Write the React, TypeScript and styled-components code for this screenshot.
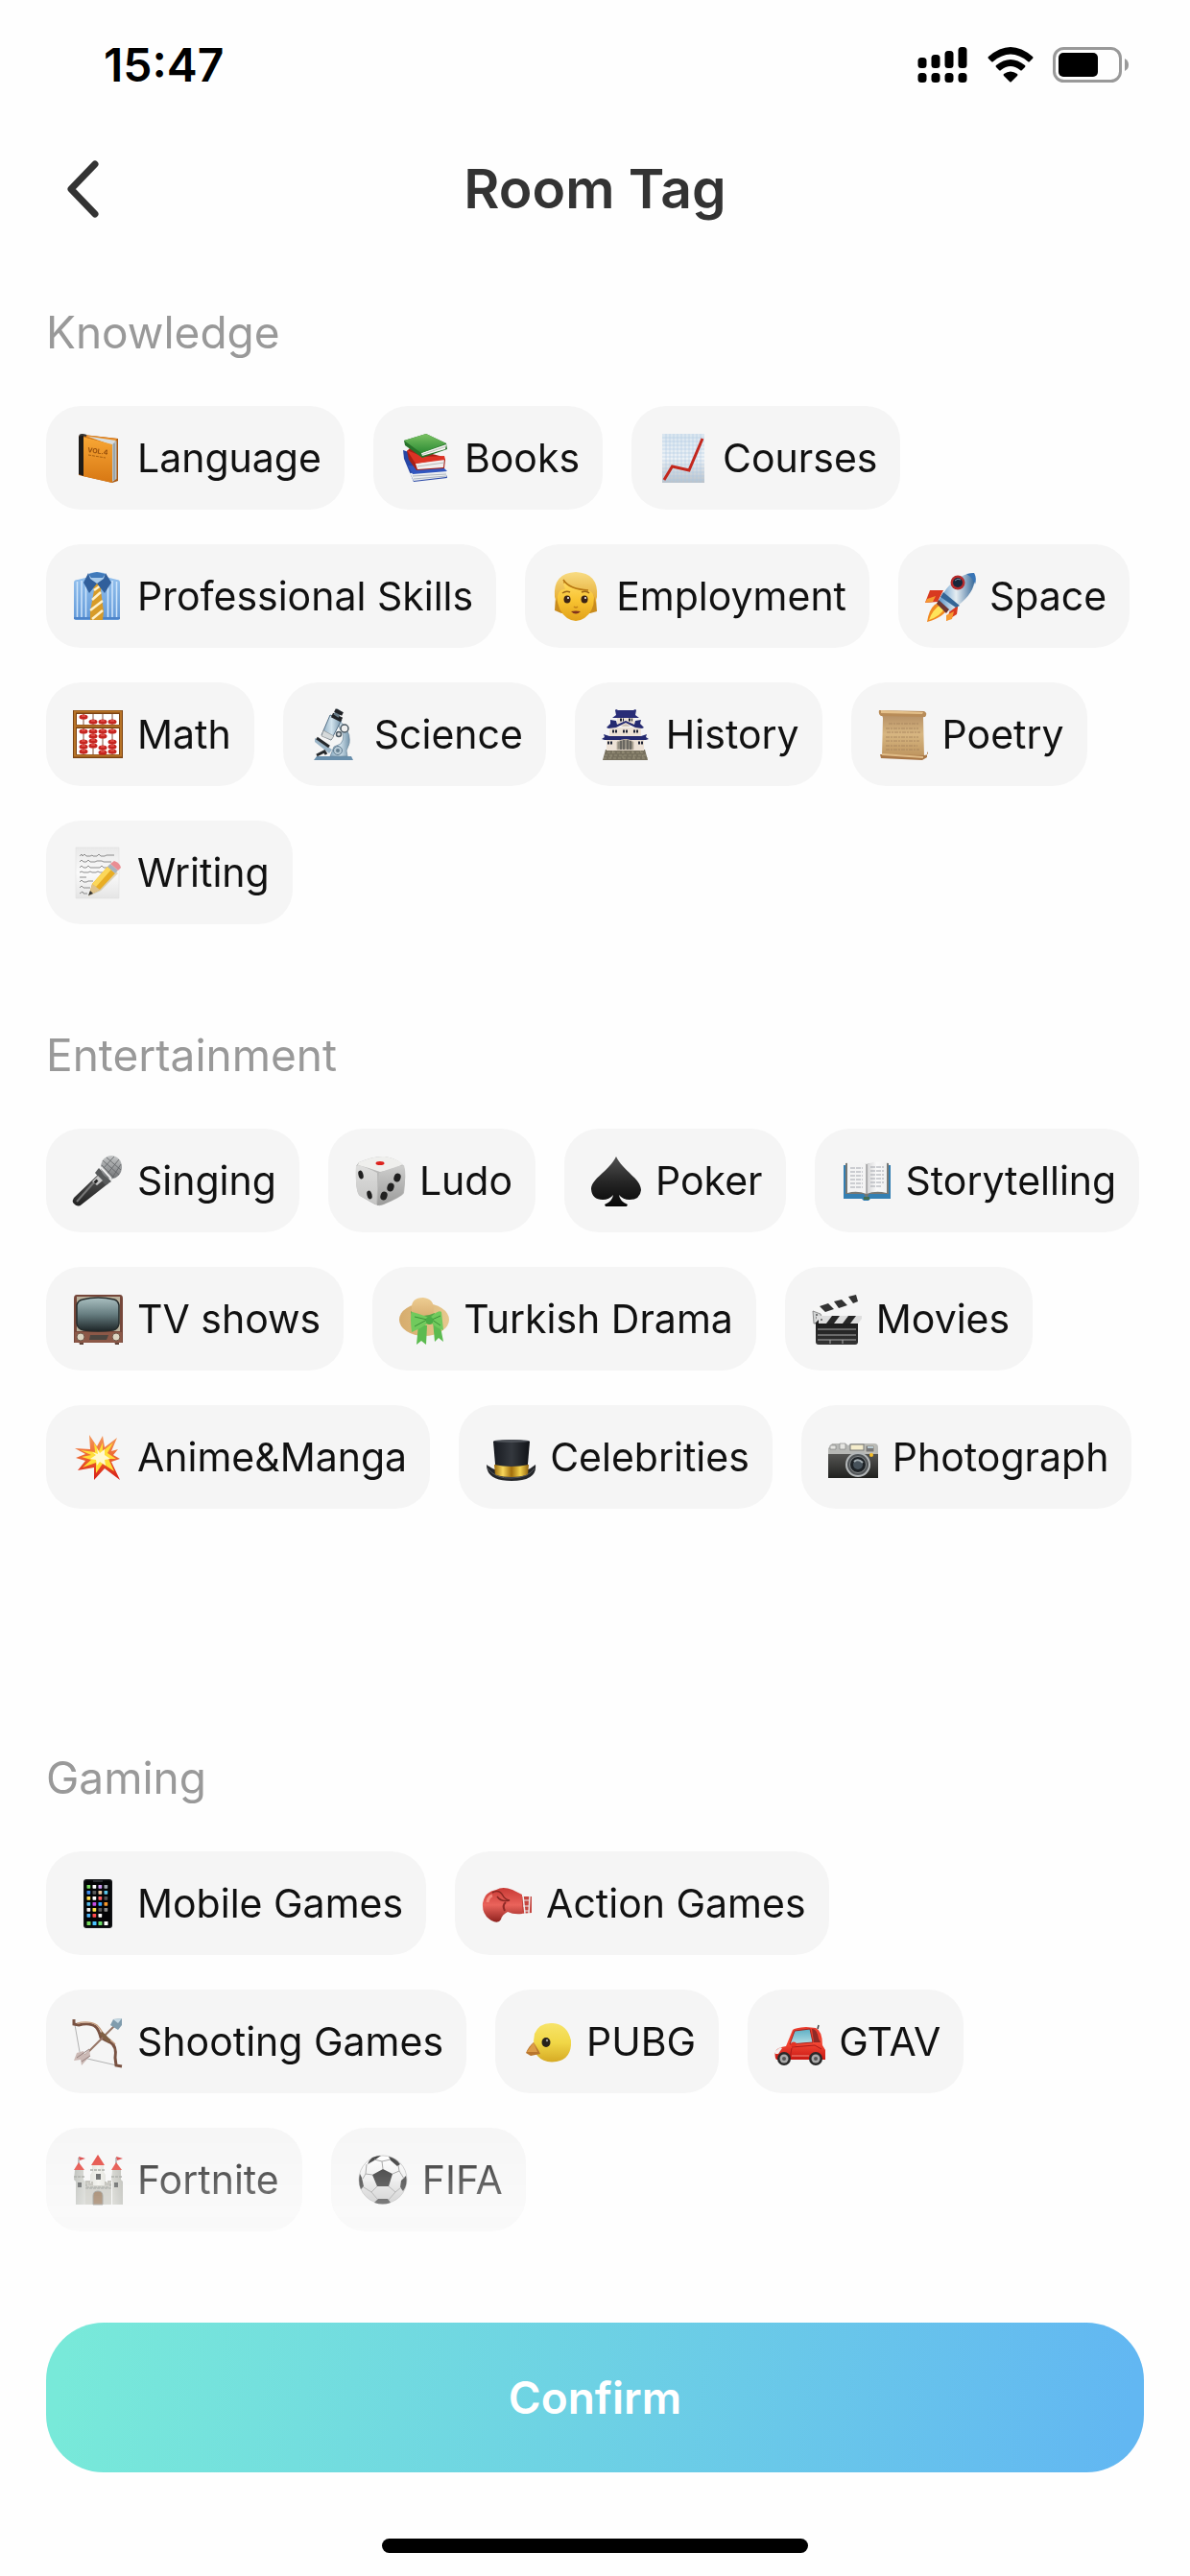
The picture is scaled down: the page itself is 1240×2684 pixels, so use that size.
import React, { useState } from "react";
import styled, { createGlobalStyle } from "styled-components";

const GlobalStyle = createGlobalStyle`
  *, *::before, *::after { box-sizing: border-box; }
  body {
    margin: 0;
    background: #fefefe;
    font-family: Inter, "Liberation Sans", sans-serif;
  }
`;

const Page = styled.div`
  display: flex;
  flex-direction: column;
  min-height: 100vh;
`;

const StatusBar = styled.div`
  display: flex;
  align-items: center;
  justify-content: space-between;
  height: 136px;
  padding: 0 63px 0 108px;
`;

const Clock = styled.time`
  font-size: 48px;
  line-height: 56px;
  font-weight: 600;
  color: #000;
`;

const StatusIcons = styled.div`
  display: flex;
  align-items: center;
  gap: 20px;
  svg { display: block; }
`;

const Header = styled.header`
  display: grid;
  grid-template-columns: 120px 1fr 120px;
  align-items: center;
  height: 122px;
`;

const BackButton = styled.button`
  display: flex;
  justify-content: center;
  padding: 24px 0 24px 52px;
  border: 0;
  background: none;
  color: #333;
  cursor: pointer;
`;

const Title = styled.h1`
  margin: 0;
  text-align: center;
  font-size: 57px;
  line-height: 72px;
  font-weight: 600;
  color: #333;
`;

const Content = styled.main`
  display: flex;
  flex-direction: column;
  flex: 1;
  gap: 108px;
  padding: 60px 48px 95px;
  mask-image: linear-gradient(to bottom, #000 calc(100% - 220px), transparent);
`;

const Section = styled.section`
  display: flex;
  flex-direction: column;
  gap: 49px;
`;

const SectionTitle = styled.h2`
  margin: 0;
  font-size: 46px;
  line-height: 56px;
  font-weight: 400;
  color: #999;
`;

const TagList = styled.div<{ $rows: number }>`
  display: flex;
  flex-wrap: wrap;
  align-content: flex-start;
  gap: 36px 30px;
  min-height: ${(p) => p.$rows * 144 - 36}px;
`;

const Tag = styled.button`
  display: flex;
  align-items: center;
  gap: 15px;
  height: 108px;
  padding: 0 24px 0 28px;
  border: 0;
  border-radius: 36px;
  background: #f5f5f5;
  color: #111;
  font-family: inherit;
  font-size: 41px;
  line-height: 52px;
  white-space: nowrap;
  cursor: pointer;
  &[aria-pressed="true"] { background: #d9f5f2; }
`;

const EmojiSvg = styled.svg`
  display: block;
  flex: none;
  width: 52px;
  height: 52px;
  overflow: visible;
`;

const Footer = styled.footer`
  display: flex;
  flex-direction: column;
  align-items: center;
  gap: 69px;
  padding: 0 48px 24px;
`;

const ConfirmButton = styled.button`
  width: 100%;
  height: 156px;
  border: 0;
  border-radius: 60px;
  background: linear-gradient(98deg, #78e9d9 2%, #6dd1e4 50%, #62b7f2 98%);
  color: #fff;
  font-family: inherit;
  font-size: 46px;
  line-height: 56px;
  font-weight: 600;
  cursor: pointer;
`;

const HomeIndicator = styled.div`
  width: 444px;
  max-width: 100%;
  height: 15px;
  border-radius: 8px;
  background: #000;
`;

const ART: Record<string, React.ReactNode> = {
  ledger: (
    <>
      <path d="M6 4Q7 1 11 2L47 6V50L41 52L6 44Z" fill="#a8570f" />
      <path d="M14 2.5L46 6L45 8L40 12L12 4Z" fill="#e98b22" />
      <path d="M15 3.5L45 8L41 13Z" fill="#d6dde0" />
      <path d="M41 12L45.500 8V48L41 51Z" fill="#b9c2c6" />
      <path d="M43 11V49" stroke="#7f888c" />
      <path d="M10 4L41 12V52L10 45Z" fill="url(#ledgerCover)" />
      <path d="M6 4Q7 1 11 3V45L6 43Z" fill="#1d1b19" />
      <path d="M7 3Q9 1 14 3" stroke="#333" strokeWidth="2" fill="none" />
      <text x="15" y="20" fontSize="7" fontWeight="700" fill="#98500c" transform="rotate(8 15 20)">VOL.4</text>
      <path d="M16 23L34 26" stroke="#a8600f" strokeWidth="1" strokeDasharray="3 1" />
    </>
  ),
  books: (
    <>
      <path d="M3 18L9 20L47 40L49 47L14 51L4 27Z" fill="#2746a5" />
      <path d="M10 42L48 39L48 46L14 50Z" fill="#eceef0" />
      <path d="M8 34L45 36L49 40L13 43Z" fill="#3156bf" />
      <path d="M13 45L48 43M14 48L48 45" stroke="#9ca7b5" strokeWidth=".8" />
      <path d="M7 19L10 16L45 25L47 28L46 37L17 39L9 28Z" fill="#a61f16" />
      <path d="M16 32L46 27L45 36L18 38Z" fill="#f1eeee" />
      <path d="M7 18L24 25L46 24L47 28L16 32Z" fill="#dc3324" />
      <path d="M18 35L46 31" stroke="#aaa" strokeWidth=".8" />
      <path d="M4 8L27 1L48 11L49 17L23 26L5 13Z" fill="#27722a" />
      <path d="M22 21L48 12L47 17L23 24Z" fill="#f7f7f4" />
      <path d="M4 8L27 1L48 11L22 21Z" fill="url(#booksGreen)" />
      <path d="M23 22.500L47 14.500" stroke="#aab0a8" strokeWidth=".8" />
    </>
  ),
  chart: (
    <>
      <path d="M4 1H48V52H4Z" fill="url(#chartPaper)" />
      <path d="M8 1V52M12 1V52M16 1V52M20 1V52M24 1V52M28 1V52M32 1V52M36 1V52M40 1V52M44 1V52M4 5H48M4 9H48M4 13H48M4 17H48M4 21H48M4 25H48M4 29H48M4 33H48M4 37H48M4 41H48M4 45H48M4 49H48" stroke="#a9c4e2" strokeWidth=".5" />
      <path d="M6 49L14.500 35L32 39L46 6" fill="none" stroke="#c3271d" strokeWidth="3" />
    </>
  ),
  shirt: (
    <>
      <path d="M1 12Q1 9 5 9L17 6H34L46 9Q49 9 49 12V49Q49 51 47 51H3Q1 51 1 49Z" fill="url(#shirtBlue)" />
      <path d="M4.500 11V48M9 10V48M13.500 10V48M36.500 10V48M41 10V48M45.500 11V48" stroke="#cfe5fb" strokeWidth="1.500" />
      <path d="M1 49H18M31 49H49" stroke="#4c83c9" strokeWidth="2" />
      <path d="M18 2Q25 0 33 2L36 9L25 15L15 9Z" fill="#a9cbea" />
      <path d="M20 13H30L29 20L32 42L31 51H18V42L22 20Z" fill="#d79b28" />
      <path d="M22 20L29 15M20 30L29 22M18 41L31 31M20 50L31 41" stroke="#fff1c9" strokeWidth="2.500" />
      <path d="M16 2L11 12L17 23L25 13L18 8Z" fill="#315f9b" />
      <path d="M34 2L40 12L33 23L25 13L32 8Z" fill="#315f9b" />
      <path d="M16 3L25 1L34 3L31 7H19Z" fill="#417aba" />
    </>
  ),
  person: (
    <>
      <path d="M4 26Q4 8 25 8Q46 8 46 29L47 42L40 44H10L3 41Z" fill="#c98b1c" />
      <path d="M5 25Q8 10 25 9Q43 10 44 28Q44 42 34 49Q25 55 16 49Q6 42 5 25Z" fill="url(#skin)" />
      <path d="M3 27Q1 2 25 1Q49 2 47 27L45 34Q45 22 38 20Q22 18 12 10Q12 15 14 19Q8 18 6 26L5 32Z" fill="url(#hair)" />
      <path d="M12 9Q18 19 38 20" fill="none" stroke="#b67612" strokeWidth="1.500" />
      <ellipse cx="16" cy="29.500" rx="3.500" ry="4" fill="#3c2415" />
      <ellipse cx="34" cy="29.500" rx="3.500" ry="4" fill="#3c2415" />
      <circle cx="17" cy="28" r="1" fill="#fff" />
      <circle cx="35" cy="28" r="1" fill="#fff" />
      <path d="M11 23Q15 20 19 22M31 22Q36 20 39 23" fill="none" stroke="#9b6516" strokeWidth="1.500" />
      <path d="M23 37Q25 39 27 37" fill="none" stroke="#c4831a" strokeWidth="1.500" />
      <path d="M20 42Q25 41 30 42Q25 47 20 42Z" fill="#81331d" />
    </>
  ),
  rocket: (
    <>
      <path d="M5 20L19 20L13 32L0 33Z" fill="#d83a20" />
      <path d="M28 35L35 31L33 45L22 52Z" fill="#d83a20" />
      <path d="M2 29L11 26L8 32L0 33ZM22 46L30 42L28 50L22 52Z" fill="#f69a32" />
      <path d="M17 31L24 38Q20 48 2 53Q4 40 10 35Z" fill="#f08922" />
      <path d="M17 34L21 38Q16 47 4 51Q7 41 17 34Z" fill="#ffe45a" />
      <path d="M51 2Q55 20 34 36L26 42L13 32L19 23Q32 3 51 2Z" fill="url(#rocketBody)" />
      <path d="M19 22L36 36L32 38L16 27Z" fill="#346596" />
      <path d="M43 3Q51 8 52 14Q54 7 51 2Z" fill="#3875b6" />
      <path d="M14 30L25 40L22 44L12 34Z" fill="#6e3532" />
      <circle cx="34" cy="12" r="7.500" fill="#b52b2c" />
      <circle cx="34" cy="12" r="5" fill="#17263b" />
      <path d="M31 10Q34 7 37 9" fill="none" stroke="#7990a7" />
    </>
  ),
  abacus: (
    <>
      <path d="M0 1H52V51H0Z" fill="#fff" />
      <path d="M11 3V49M21 3V49M31 3V49M41 3V49" stroke="#86513a" strokeWidth="1" />
      <path d="M2 3H50V49H2ZM2 18H50" fill="none" stroke="#7b4313" strokeWidth="4" />
      <path d="M2 2.500H50V48.500H2ZM2 17.500H50" fill="none" stroke="#b87428" strokeWidth="2" />
      {[[11, 8], [21, 13], [31, 13], [41, 13], [11, 23], [21, 23], [31, 23], [41, 23], [21, 28], [31, 28], [11, 34], [21, 33], [41, 34], [11, 39], [21, 38], [31, 40], [41, 39], [11, 44], [31, 45], [41, 44]].map(([x, y]) => (
        <g key={`${x}-${y}`}>
          <ellipse cx={x} cy={y} rx="4.500" ry="2.600" fill="#c62520" />
          <path d={`M${x - 2} ${y - 1}H${x + 2}`} stroke="#f46c62" />
        </g>
      ))}
    </>
  ),
  microscope: (
    <>
      <path d="M7 49H43L45 53H4Z" fill="#698fac" />
      <path d="M29 10Q48 27 38 43L39 49H21L25 39L32 36Q38 28 31 20Z" fill="url(#steel)" stroke="#6b879b" strokeWidth=".7" />
      <path d="M5 30L23 42L20 46L5 34Z" fill="#9ab4c6" />
      <path d="M7 30L20 39" stroke="#26292c" strokeWidth="3" />
      <path d="M7 48L15 44L17 47" stroke="#26292c" strokeWidth="3" fill="none" />
      <path d="M21 6L33 11L22 32L12 27Z" fill="url(#steel)" stroke="#547086" />
      <path d="M14 22L25 28L22 32L12 28Z" fill="#d6dadb" stroke="#777" strokeWidth=".5" />
      <path d="M23 6L33 11" stroke="#202226" strokeWidth="5" />
      <path d="M27 7L31 1" stroke="#697c88" strokeWidth="6" />
      <path d="M26 1L34 5" stroke="#202226" strokeWidth="4" />
      <circle cx="36" cy="20" r="4" fill="#eee" stroke="#49565f" strokeWidth="1.500" />
      <circle cx="30" cy="26" r="2.500" fill="#ddd" stroke="#49565f" strokeWidth="1.500" />
      <circle cx="29" cy="43" r="4.500" fill="#b7cad6" stroke="#627d91" />
      <circle cx="29" cy="43" r="2" fill="#657f91" />
    </>
  ),
  japanCastle: (
    <>
      <path d="M4 42H45L48 53H1Z" fill="#77705e" />
      <path d="M6 45H43M3 48H46M2 51H48M12 43L9 52M22 43V52M32 43L34 52M40 43L44 52" stroke="#979079" strokeWidth="1" strokeDasharray="3 2" />
      <path d="M5 30H44V43H5ZM8 19H41V28H8ZM16 8H34V17H16Z" fill="#ede2d6" />
      <path d="M14 1L15 0L17 1H33L35 0L36 1L35 6L39 9H11L15 6Z" fill="#292d77" />
      <path d="M9 11L15 12L16 16L25 12L34 16L35 12L41 11L40 15L44 19L42 20L35 19L25 14L15 19L7 20L5 19L9 15Z" fill="#252a70" />
      <path d="M25 15L30 18H20Z" fill="#cfc3b8" />
      <path d="M2 26L8 28H41L47 26L46 29L49 31L46 32H3L0 31L3 29Z" fill="#252a70" />
      <path d="M16 42V34Q25 29 33 34V42Z" fill="#969083" stroke="#c4b8a7" />
      <path d="M20 33V42M23 32V42M27 32V42M30 33V42" stroke="#4e4d4b" strokeWidth="1.200" />
      <path d="M11 23H16M22 23H28M33 23H38M6 35H11M38 35H43M19 11H23M28 11H32" stroke="#1c2132" strokeWidth="3" strokeDasharray="2 1" />
    </>
  ),
  scroll: (
    <>
      <path d="M3 3H49L47 9L48 49H4L5 9Z" fill="url(#parchment)" />
      <path d="M1 1L48 2Q52 4 49 8L3 7Q0 5 1 1Z" fill="#b88c58" />
      <path d="M3 1L47 3L46 5L3 4Z" fill="#e4c08a" />
      <path d="M2 47L48 48Q54 47 51 44V50L46 53L3 51Z" fill="#a97747" />
      <path d="M4 47L47 50" stroke="#e0bc87" strokeWidth="2" />
      <path d="M11 15H43M8 20H42M9 24H44M8 29H42M8 33H43M8 38H41M8 42H43" stroke="#a3805c" strokeWidth=".8" strokeDasharray="4 1 2 1" />
    </>
  ),
  memo: (
    <>
      <path d="M3 0H48V53H3Z" fill="url(#paper)" stroke="#dcdcdc" strokeWidth=".5" />
      <path d="M7 9L9 7L10 9L12 7L14 9H18L20 8L21 9H25L27 7L29 9H33L35 8H43M7 15L9 13L11 15H14L16 13L18 15H23L25 14H30L32 15H40M7 21L9 19L11 21H14L16 19L18 21H28L30 19L32 21H39M7 26L9 25L11 26H16L18 25L20 26H24L26 25L28 26H33M7 31H14M7 36L9 34L11 36H14L16 35H21M7 42L9 40L11 42H18M7 48L10 46L11 48H15" fill="none" stroke="#808080" strokeWidth=".9" />
      <path d="M16 51L20 39L38 18L47 27L29 45Z" fill="#a27d25" opacity=".3" />
      <path d="M17 49L20 38L36 20L44 27L28 44Z" fill="#e8ad24" />
      <path d="M20 38L36 20L40 23L24 41Z" fill="#fbd75a" />
      <path d="M20 38L28 44L17 49Z" fill="#dec28c" />
      <path d="M16 50L18 45L21 48Z" fill="#333" />
      <path d="M36 20L39 17L47 24L44 27Z" fill="#a8b5bf" />
      <path d="M39 17L43 14Q49 16 50 21L47 24Z" fill="#ea8e93" />
    </>
  ),
  mic: (
    <>
      <path d="M28 18L37 29L9 51Q5 55 0 49Q-1 47 1 44Z" fill="url(#blackMetal)" />
      <path d="M28 21L4 48" stroke="#777" strokeWidth="2" />
      <path d="M27 13L40 27L34 31L23 18Z" fill="#57595a" />
      <path d="M29 13L41 25" stroke="#d1d3d3" strokeWidth="2" />
      <ellipse cx="40" cy="12" rx="11" ry="12" fill="url(#micHead)" />
      <path d="M31 5L48 20M35 2L50 15M30 10L43 23M43 1L31 14M48 4L35 20M50 9L41 23" stroke="#606264" strokeWidth=".8" />
      <path d="M29 12L40 24" stroke="#eee" strokeWidth="2" />
      <path d="M26 21L31 26L25 31L20 27Z" fill="#c7c7c7" />
      <path d="M23 26L25 28" stroke="#222" strokeWidth="4" />
    </>
  ),
  dice: (
    <>
      <path d="M4 7Q20 0 31 1Q43 3 49 9Q54 13 51 39Q49 43 30 51Q24 54 17 49L5 42Q0 38 1 11Z" fill="#b9b9b8" />
      <path d="M4 7Q20 0 31 1Q43 3 50 9Q41 14 26 17Q12 12 3 10Z" fill="#efefed" />
      <path d="M3 10Q12 12 23 18Q24 35 22 51L5 42Q0 38 1 11Z" fill="url(#diceLeft)" />
      <path d="M25 18Q40 12 51 10Q54 20 50 39Q48 43 29 51L23 52Z" fill="url(#diceRight)" />
      <ellipse cx="26" cy="8" rx="4.500" ry="2" fill="#dd231e" />
      <ellipse cx="6" cy="20" rx="2.500" ry="4.500" fill="#202020" transform="rotate(-15 6 20)" />
      <ellipse cx="15" cy="41" rx="2.500" ry="4.500" fill="#202020" transform="rotate(-15 15 41)" />
      <ellipse cx="44" cy="23" rx="3.500" ry="4.500" fill="#202020" transform="rotate(20 44 23)" />
      <ellipse cx="37" cy="33" rx="3.500" ry="4.500" fill="#202020" transform="rotate(20 37 33)" />
      <ellipse cx="30" cy="42" rx="3.500" ry="4.500" fill="#202020" transform="rotate(20 30 42)" />
    </>
  ),
  spade: (
    <path d="M26 1C33 16 52 24 52 36Q51 46 40 46Q33 46 29 41Q30 48 38 51L37 53H15L14 51Q22 48 23 41Q19 46 12 46Q1 46 0 35C0 24 19 16 26 1Z" fill="url(#spadeInk)" />
  ),
  openBook: (
    <>
      <path d="M2 10H51V45H30L28 47H23L21 45H2Z" fill="#347fb2" />
      <path d="M4 8Q18 6 26 9Q37 6 49 8V40H29L26 44L23 40H4Z" fill="#777874" />
      <path d="M6 7Q19 5 26 9V40Q16 36 6 39Z" fill="#f4f4f4" />
      <path d="M26 9Q36 5 47 7V39Q35 36 26 40Z" fill="url(#pageShade)" />
      <path d="M9 13H22M9 17H22M9 21H22M9 25H22M9 29H22M9 33H22M30 12H44M30 16H44M30 20H44M30 24H44M30 28H44M30 32H42" stroke="#a2a5ad" strokeWidth="1" strokeDasharray="5 1" />
      <path d="M26 9V40" stroke="#777" />
      <path d="M23 43H29V46H23Z" fill="#426e52" />
    </>
  ),
  tv: (
    <>
      <path d="M6 49H11V53H7ZM43 49H48V53H44Z" fill="#604339" />
      <path d="M4 1H49Q52 1 52 5V51H1V5Q1 1 4 1Z" fill="#76473a" />
      <path d="M4 3H49V39H4Z" fill="#b9b09b" />
      <path d="M10 6Q26 2 43 6Q47 7 48 12V31Q47 37 42 38Q26 40 11 38Q5 37 4 31V12Q5 7 10 6Z" fill="url(#screen)" stroke="#252b2b" strokeWidth="1.500" />
      <path d="M2 40H51V51H2Z" fill="#8c5847" />
      <path d="M18 43H37L35 48H17Z" fill="#4d4640" />
      <circle cx="8" cy="45" r="4" fill="#ddd6c3" stroke="#6e5648" />
      <circle cx="45" cy="45" r="4" fill="#ddd6c3" stroke="#6e5648" />
    </>
  ),
  hat: (
    <>
      <ellipse cx="26" cy="27" rx="26" ry="17" fill="url(#straw)" />
      <path d="M13 16Q12 4 25 4Q36 5 36 16L35 29Q24 34 13 27Z" fill="url(#crown)" />
      <path d="M12 18Q22 27 37 20L36 31H14Z" fill="#56a849" />
      <path d="M20 32L18 53L23 49L28 53L29 33ZM35 28L37 50L41 46L46 50L42 29Z" fill="#5cbb50" />
      <path d="M31 25Q19 20 13 19Q11 25 13 40Q23 36 31 30ZM32 25Q41 16 44 19L46 38Q39 36 33 30Z" fill="#71ca5d" />
      <path d="M16 24L29 27L16 34M43 23L34 27L43 33" fill="none" stroke="#3b9137" />
      <rect x="28" y="24" width="7" height="8" rx="3" fill="#4aad46" />
    </>
  ),
  clapper: (
    <>
      <path d="M0 15L46 1L48 9L5 22Z" fill="#f6f6f5" />
      <path d="M8 13L17 10L23 16L14 19ZM23 8L31 6L37 12L28 15ZM38 3L46 1L48 8L43 10Z" fill="#333" />
      <path d="M1 18L9 21L13 31H2Z" fill="#d2d4d4" stroke="#777" strokeWidth=".8" />
      <rect x="4" y="23" width="44" height="30" rx="3" fill="url(#clapBoard)" />
      <path d="M5 23H52V26L48 31H3Z" fill="#ddd" />
      <path d="M15 31L21 23H29L23 31ZM32 31L38 23H46L40 31ZM3 31L7 27V31Z" fill="#272727" />
      <path d="M6 37H46M6 43H46M6 48H46M19 48V52M32 48V52" stroke="#aaa" strokeWidth="1" />
      <circle cx="5" cy="22" r="1" fill="#555" /><circle cx="10" cy="27" r="1" fill="#555" />
    </>
  ),
  boom: (
    <>
      <path d="M17 3L25 15L31 4L33 16L46 6L40 20L47 18L42 24L49 28L40 31L49 50L33 38L22 50L22 37L5 40L13 30L3 27L13 23L2 17L18 18Z" fill="url(#burst)" />
      <path d="M22 11L27 20L31 11L31 20L42 11L36 22L45 28L37 28L43 41L31 33L24 43L24 32L10 37L19 29L9 26L19 24L8 19L23 21Z" fill="#ffdf36" />
      <path d="M25 17L28 22L33 18L33 24L39 28L33 29L34 35L28 31L25 35L24 29L18 28L24 24L20 21L26 23Z" fill="#fff9cf" />
    </>
  ),
  topHat: (
    <>
      <path d="M1 34Q12 43 27 42Q42 43 52 34Q54 51 27 51Q1 51 1 34Z" fill="#24262a" />
      <path d="M8 10Q27 6 46 10L43 45Q27 50 11 45Z" fill="url(#hatBlack)" />
      <ellipse cx="27" cy="9.500" rx="19" ry="1.500" fill="#4d5157" />
      <path d="M9 34Q27 38 45 34L44 45Q27 49 10 45Z" fill="url(#goldBand)" />
      <path d="M2 38Q11 49 27 48Q44 48 51 38" fill="none" stroke="#55585b" strokeWidth="1" />
    </>
  ),
  camera: (
    <>
      <path d="M2 15L4 12H18L21 14L24 12H48Q52 12 52 16V48H0V17Z" fill="#b7b8b5" />
      <path d="M0 23H52V48H0Z" fill="url(#cameraLeather)" />
      <path d="M2 14H8V18H2ZM12 12H18V18H12Z" fill="#e5e5e2" stroke="#777" strokeWidth=".6" />
      <rect x="23" y="13" width="14" height="6" fill="#f5edcc" stroke="#777" />
      <rect x="39" y="14" width="9" height="7" fill="#777" stroke="#c8c5bb" />
      <path d="M41 16H47" stroke="#b9cad1" strokeWidth="2" />
      <circle cx="31" cy="34" r="13" fill="#b4b8b9" />
      <circle cx="31" cy="34" r="11" fill="#515558" />
      <circle cx="31" cy="34" r="8.500" fill="#1d2226" stroke="#85898a" />
      <circle cx="31" cy="34" r="5" fill="#46515a" />
      <path d="M27 31Q31 27 36 32" stroke="#a5afb4" strokeWidth="2" fill="none" />
      <circle cx="45" cy="24" r="2" fill="#f8bf26" />
    </>
  ),
  phone: (
    <>
      <rect x="11" y="1" width="30" height="51" rx="3" fill="#151619" />
      <rect x="12.500" y="2.500" width="27" height="48" rx="2" fill="#030406" />
      <path d="M21 3H31" stroke="#373a40" strokeWidth="1.500" />
      {["#78dc5e", "#fff", "#cf9cf5", "#9ea6ad", "#418fed", "#5c5c5c", "#e8c59c", "#5bc7eb", "#ffdf54", "#fff", "#ff5e64", "#555", "#59bced", "#c54be5", "#35a5ff", "#f6972c", "#eee", "#ffe44b", "#5a5a5a", "#888", "#4eb5fa", "#ff4a4e", "#fff"].map((color, index) => (
        <rect key={index} x={14.5 + (index % 4) * 6} y={7 + Math.floor(index / 4) * 6} width="3.700" height="3.700" rx=".6" fill={color} />
      ))}
      {["#78dc5e", "#48c2ff", "#6add66", "#fff"].map((color, index) => (
        <rect key={color} x={14.5 + index * 6} y="45" width="4" height="4" rx=".6" fill={color} />
      ))}
    </>
  ),
  glove: (
    <>
      <path d="M40 19H52V36L40 37Z" fill="#c54640" />
      <path d="M43 18L45 37M50 18L49 37" stroke="#eee" strokeWidth="1.500" />
      <path d="M43 23H49M43 29H49M44 34H49" stroke="#eee" />
      <path d="M1 26Q3 14 15 12Q22 8 32 12L42 17V37Q33 38 27 35Q21 38 20 43Q17 48 10 44Q0 38 1 26Z" fill="url(#gloveRed)" />
      <path d="M11 15Q18 11 22 18Q24 22 29 23Q20 25 16 19" fill="none" stroke="#892722" strokeWidth="1.500" />
      <path d="M25 25Q21 28 24 34" fill="none" stroke="#8e2926" strokeWidth="2" />
      <path d="M6 25Q7 19 11 18" stroke="#f48a7d" strokeWidth="3" fill="none" />
    </>
  ),
  bow: (
    <>
      <path d="M1 3L7 37L15 44L50 52" fill="none" stroke="#a9a9a9" strokeWidth=".9" />
      <path d="M1 3V8L6 9Q18 6 24 11Q27 14 29 22Q34 25 39 27Q46 31 44 43L45 51L51 52" fill="none" stroke="#795242" strokeWidth="3" />
      <path d="M4 7Q17 4 25 9Q31 15 32 21Q39 23 44 29" fill="none" stroke="#c59b7b" strokeWidth="1.200" />
      <path d="M8 45L46 7" stroke="#967566" strokeWidth="2" />
      <path d="M39 9L42 3L51 2V9L47 14Z" fill="#809cad" />
      <path d="M42 3L47 7L51 2Z" fill="#c7dae4" />
      <path d="M17 34L18 41L9 51L8 45L1 46L4 38L11 36L12 40Z" fill="#cbb9b5" />
      <path d="M17 34L4 43M18 41L9 47" stroke="#95807d" />
      <path d="M29 17L38 26" stroke="#806044" strokeWidth="4" />
    </>
  ),
  chick: (
    <>
      <path d="M13 18Q18 6 32 7Q47 8 51 25Q52 44 36 47Q23 49 16 41Q10 34 13 18Z" fill="url(#chickYellow)" />
      <path d="M12 27L17 35L19 39L9 41L4 38Q7 31 12 27Z" fill="#b9762e" />
      <path d="M12 27L16 37L5 37Z" fill="#dc9c48" />
      <ellipse cx="25" cy="27" rx="4.500" ry="5" fill="#27221b" />
      <circle cx="26" cy="25" r="1.200" fill="#999" />
    </>
  ),
  car: (
    <>
      <path d="M45 13L46 9" stroke="#444" strokeWidth="1.500" />
      <path d="M12 31L19 14Q21 12 33 11L43 12Q50 15 50 30L53 35V45H2Q-1 40 2 35Q4 32 12 31Z" fill="url(#carRed)" />
      <path d="M21 15L37 13L40 27L16 29Z" fill="url(#carGlass)" stroke="#a7201a" />
      <path d="M39 13Q44 12 46 23L48 27L41 27Z" fill="#8e2a26" />
      <path d="M18 32L42 30L49 34M18 33L16 44" fill="none" stroke="#a91b18" />
      <path d="M1 36L6 32L8 33L4 39H1Z" fill="#efeded" />
      <ellipse cx="20" cy="29" rx="3" ry="2.500" fill="#e43324" />
      <circle cx="10" cy="44" r="7" fill="#292929" /><circle cx="10" cy="44" r="4.500" fill="#aaa" /><circle cx="10" cy="44" r="2" fill="#555" />
      <circle cx="43" cy="44" r="7" fill="#292929" /><circle cx="43" cy="44" r="4.500" fill="#aaa" /><circle cx="43" cy="44" r="2" fill="#555" />
      <path d="M18 41H36" stroke="#f08c80" />
    </>
  ),
  castle: (
    <>
      <path d="M6 10V3M45 10V3M26 5V1" stroke="#666" strokeWidth="1" />
      <path d="M6 2L13 4L7 6ZM45 2L52 4L46 6Z" fill="#d32424" />
      <path d="M12 29H40V52H12Z" fill="#bdbdb4" />
      <path d="M2 16H11V26L13 28V52H3V28L1 26ZM41 16H50V26L52 28V52H41V28L40 26ZM20 10H32V18L34 21V32H18V21L20 18Z" fill="url(#stone)" />
      <path d="M1 16L6 8L12 16ZM40 16L45 8L51 16ZM19 11L26 0L33 11Z" fill="#df2c22" />
      <path d="M1 23H12M40 23H51M18 16H34M14 30V35H39V30M14 34H38" stroke="#8f918a" strokeWidth="1.500" fill="none" strokeDasharray="3 1" />
      <path d="M24 20H29V26H24ZM5 29H9V34H5ZM43 29H47V34H43Z" fill="#373a3a" />
      <path d="M21 52V43Q21 38 26 38Q31 38 31 43V52Z" fill="#7d552f" stroke="#77766e" />
      <path d="M14 31V28H17V31H20V28M34 28V31H37V28H40" stroke="#aaa99f" strokeWidth="2" fill="none" />
    </>
  ),
  ball: (
    <>
      <circle cx="26" cy="26" r="25" fill="url(#ballWhite)" stroke="#999" strokeWidth=".6" />
      <path d="M26 15L36 20L32 33H20L15 21Z" fill="#101010" />
      <path d="M15 3Q20 1 24 1L17 6L10 10Q11 6 15 3ZM32 2Q40 4 44 10L41 12L34 6ZM2 20L4 24L6 33L3 36Q0 29 2 20ZM50 22Q52 31 47 38L44 34L45 27ZM21 46H31L34 50Q26 53 17 50Z" fill="#171717" />
      <path d="M26 15L25 7L17 5M25 7L34 5M36 20L43 17L42 11M15 21L8 20L9 10M8 20L5 25M43 17L48 25M20 33L14 39L6 34M14 39L20 46M32 33L39 39L45 34M39 39L32 47" fill="none" stroke="#8c8c8c" strokeWidth="1" />
    </>
  ),
};

type Gradient = [string, string[], boolean?];

const GRADIENTS: Gradient[] = [
  ["ledgerCover", ["#f8a735", "#d77713"]],
  ["booksGreen", ["#7bc263", "#2c8b34"]],
  ["chartPaper", ["#d9e5ef", "#edf2f6", "#b9c2cb"]],
  ["shirtBlue", ["#93c0ed", "#6299d8"]],
  ["skin", ["#ffdd67", "#f8c331", "#e1a11a"]],
  ["hair", ["#f8dc83", "#e3a72c"]],
  ["rocketBody", ["#4f8ec6", "#e6eef2", "#386998"], true],
  ["steel", ["#88a8bf", "#d2e3ed", "#7393aa"], true],
  ["parchment", ["#b18b62", "#d7b681", "#be955f"]],
  ["paper", ["#e9e9e9", "#fafafa", "#e5e5e5"]],
  ["blackMetal", ["#555", "#222"]],
  ["micHead", ["#c5c7c8", "#727476"]],
  ["diceLeft", ["#dededd", "#c5c5c4"]],
  ["diceRight", ["#cececd", "#9b9b9a"]],
  ["spadeInk", ["#515151", "#262626", "#070707"]],
  ["pageShade", ["#d3d3d4", "#fafafa", "#efefef"], true],
  ["screen", ["#aac0c1", "#667d80", "#1d2527"]],
  ["straw", ["#d6ac6d", "#e7c88e"], true],
  ["crown", ["#edcd92", "#d1a365"]],
  ["clapBoard", ["#151515", "#343434"]],
  ["burst", ["#f49a5c", "#ed642f", "#d71914"]],
  ["hatBlack", ["#171a20", "#34383e", "#101216"], true],
  ["goldBand", ["#9b6a0a", "#f9d85b", "#a16e0b", "#f5d34c", "#8f610c"], true],
  ["cameraLeather", ["#555553", "#20211f"]],
  ["gloveRed", ["#c83a35", "#ea635b", "#8e211e"]],
  ["chickYellow", ["#f7e469", "#f1d747", "#d6aa24"]],
  ["carRed", ["#e83b2d", "#f34734", "#c91813"]],
  ["carGlass", ["#5caec3", "#b6dfe5"]],
  ["stone", ["#a9aca6", "#efefe8", "#a9aaa2"], true],
  ["ballWhite", ["#fff", "#e8e8e8", "#b6b6b6"]],
];

const PaletteSvg = styled.svg`
  position: absolute;
  width: 0;
  height: 0;
`;

function Palette() {
  return (
    <PaletteSvg aria-hidden="true">
      <defs>
        {GRADIENTS.map(([id, colors, across]) => (
          <linearGradient key={id} id={id} x1="0" y1="0" x2={across ? 1 : 0} y2={across ? 0 : 1}>
            {colors.map((color, index) => (
              <stop key={index} offset={index / (colors.length - 1)} stopColor={color} />
            ))}
          </linearGradient>
        ))}
      </defs>
    </PaletteSvg>
  );
}

interface TagGroup {
  title: string;
  rows: number;
  tags: [string, string][];
}

const GROUPS: TagGroup[] = [
  {
    title: "Knowledge",
    rows: 4,
    tags: [
      ["ledger", "Language"], ["books", "Books"], ["chart", "Courses"],
      ["shirt", "Professional Skills"], ["person", "Employment"], ["rocket", "Space"],
      ["abacus", "Math"], ["microscope", "Science"], ["japanCastle", "History"], ["scroll", "Poetry"],
      ["memo", "Writing"],
    ],
  },
  {
    title: "Entertainment",
    rows: 4,
    tags: [
      ["mic", "Singing"], ["dice", "Ludo"], ["spade", "Poker"], ["openBook", "Storytelling"],
      ["tv", "TV shows"], ["hat", "Turkish Drama"], ["clapper", "Movies"],
      ["boom", "Anime&Manga"], ["topHat", "Celebrities"], ["camera", "Photograph"],
    ],
  },
  {
    title: "Gaming",
    rows: 3,
    tags: [
      ["phone", "Mobile Games"], ["glove", "Action Games"],
      ["bow", "Shooting Games"], ["chick", "PUBG"], ["car", "GTAV"],
      ["castle", "Fortnite"], ["ball", "FIFA"],
    ],
  },
];

function SignalIcon() {
  return (
    <svg width="53" height="38" viewBox="0 0 53 38" aria-hidden="true">
      {[11, 8, 4, 0].map((top, index) => (
        <g key={top}>
          <rect x={index * 14 + 0.5} y={top} width="9" height={22 - top} rx="3.500" />
          <rect x={index * 14 + 0.5} y="27" width="9" height="10" rx="3.500" />
        </g>
      ))}
    </svg>
  );
}

function WifiIcon() {
  return (
    <svg width="48" height="38" viewBox="0 0 48 38" aria-hidden="true">
      <path d="M1 10Q24-10 47 10Q48 11 47 12L44 15Q43 16 42 15Q24 0 6 15Q5 16 4 15L1 12Q0 11 1 10Z" />
      <path d="M9 19Q24 7 39 19Q40 20 39 21L36 24Q35 25 34 24Q24 16 14 24Q13 25 12 24L9 21Q8 20 9 19Z" />
      <path d="M17 28Q24 23 31 28Q32 29 31 30L25 36Q24 37 23 36L17 30Q16 29 17 28Z" />
    </svg>
  );
}

function BatteryIcon() {
  return (
    <svg width="80" height="38" viewBox="0 0 80 38" aria-hidden="true">
      <rect x="1.500" y="1.500" width="69" height="34" rx="10" fill="none" stroke="#999" strokeWidth="3" />
      <rect x="6" y="6" width="41" height="25" rx="5" />
      <path d="M75 12Q79 14 79 18.500T75 25Z" fill="#999" />
    </svg>
  );
}

export default function App() {
  const [selected, setSelected] = useState<string[]>([]);
  const toggle = (label: string) =>
    setSelected((current) =>
      current.includes(label) ? current.filter((item) => item !== label) : [...current, label]
    );

  return (
    <Page>
      <GlobalStyle />
      <Palette />
      <StatusBar>
        <Clock>15:47</Clock>
        <StatusIcons>
          <SignalIcon />
          <WifiIcon />
          <BatteryIcon />
        </StatusIcons>
      </StatusBar>
      <Header>
        <BackButton type="button" aria-label="Back">
          <svg width="36" height="60" viewBox="0 0 36 60" fill="none" stroke="currentColor" strokeWidth="7" strokeLinecap="round" strokeLinejoin="round" aria-hidden="true">
            <path d="M31 4L6 30L31 56" />
          </svg>
        </BackButton>
        <Title>Room Tag</Title>
      </Header>
      <Content>
        {GROUPS.map((group) => (
          <Section key={group.title} aria-label={group.title}>
            <SectionTitle>{group.title}</SectionTitle>
            <TagList $rows={group.rows}>
              {group.tags.map(([art, label]) => (
                <Tag key={label} type="button" aria-pressed={selected.includes(label)} onClick={() => toggle(label)}>
                  <EmojiSvg viewBox="0 0 52 52" aria-hidden="true">{ART[art]}</EmojiSvg>
                  <span>{label}</span>
                </Tag>
              ))}
            </TagList>
          </Section>
        ))}
      </Content>
      <Footer>
        <ConfirmButton type="button">Confirm</ConfirmButton>
        <HomeIndicator />
      </Footer>
    </Page>
  );
}
